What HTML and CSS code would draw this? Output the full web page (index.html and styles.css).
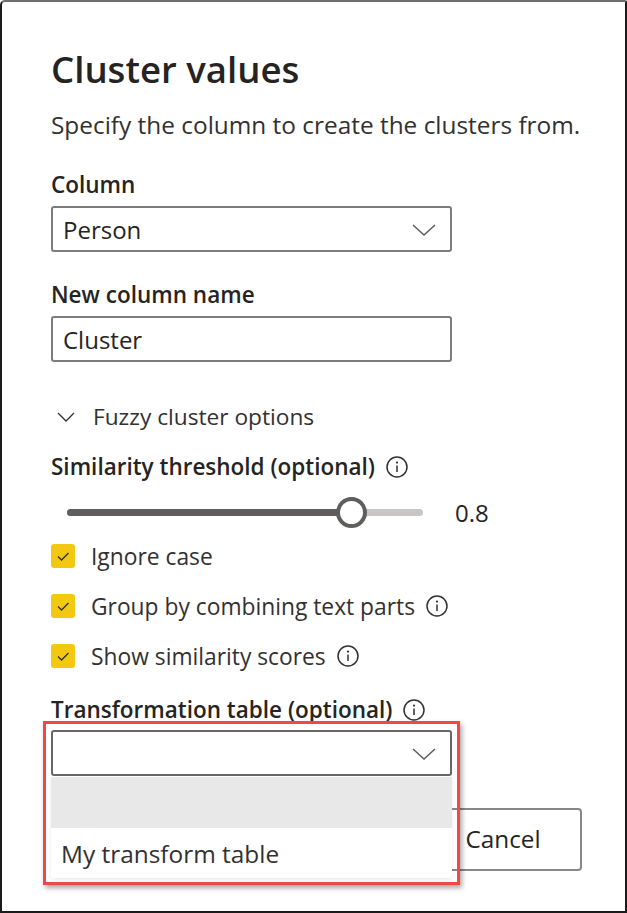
FILE: index.html
```html
<!DOCTYPE html>
<html lang="en">
<head>
<meta charset="utf-8">
<title>Cluster values</title>
<link rel="stylesheet" href="styles.css">
</head>
<body>
<div class="dialog">
  <h1 class="title">Cluster values</h1>
  <p class="subtitle">Specify the column to create the clusters from.</p>

  <label class="label label-column">Column</label>
  <div class="field select">
    <span class="field-text">Person</span>
    <svg class="chev" width="24" height="12" viewBox="0 0 24 12"><path d="M1 1 L12 11 L23 1" fill="none" stroke="#605e5c" stroke-width="1.5"/></svg>
  </div>

  <label class="label label-name">New column name</label>
  <div class="field">
    <span class="field-text">Cluster</span>
  </div>

  <div class="fuzzy">
    <svg class="fuzzy-chev" width="18" height="10" viewBox="0 0 18 10"><path d="M1 1 L9 9 L17 1" fill="none" stroke="#323130" stroke-width="1.3"/></svg>
    <span>Fuzzy cluster options</span>
  </div>

  <div class="label label-sim">Similarity threshold (optional)
    <svg class="info" width="22" height="22" viewBox="0 0 22 22"><circle cx="11" cy="11" r="10" fill="none" stroke="#323130" stroke-width="1.5"/><circle cx="11" cy="6.6" r="1.1" fill="#323130"/><path d="M11 9.5 V16" stroke="#323130" stroke-width="1.5"/></svg>
  </div>

  <div class="slider-row">
    <div class="track">
      <div class="track-fill" style="width: 80%"></div>
      <div class="thumb" style="left: 80%"></div>
    </div>
    <span class="slider-value">0.8</span>
  </div>

  <div class="checks">
    <div class="check-row">
      <span class="box"><svg width="24" height="24" viewBox="0 0 24 24"><path d="M7 12.5 L10.5 16 L17.5 9" fill="none" stroke="#323130" stroke-width="1.3"/></svg></span>
      <span>Ignore case</span>
    </div>
    <div class="check-row">
      <span class="box"><svg width="24" height="24" viewBox="0 0 24 24"><path d="M7 12.5 L10.5 16 L17.5 9" fill="none" stroke="#323130" stroke-width="1.3"/></svg></span>
      <span>Group by combining text parts</span>
      <svg class="info" width="22" height="22" viewBox="0 0 22 22"><circle cx="11" cy="11" r="10" fill="none" stroke="#323130" stroke-width="1.5"/><circle cx="11" cy="6.6" r="1.1" fill="#323130"/><path d="M11 9.5 V16" stroke="#323130" stroke-width="1.5"/></svg>
    </div>
    <div class="check-row">
      <span class="box"><svg width="24" height="24" viewBox="0 0 24 24"><path d="M7 12.5 L10.5 16 L17.5 9" fill="none" stroke="#323130" stroke-width="1.3"/></svg></span>
      <span>Show similarity scores</span>
      <svg class="info" width="22" height="22" viewBox="0 0 22 22"><circle cx="11" cy="11" r="10" fill="none" stroke="#323130" stroke-width="1.5"/><circle cx="11" cy="6.6" r="1.1" fill="#323130"/><path d="M11 9.5 V16" stroke="#323130" stroke-width="1.5"/></svg>
    </div>
  </div>

  <div class="label label-trans">Transformation table (optional)
    <svg class="info" width="22" height="22" viewBox="0 0 22 22"><circle cx="11" cy="11" r="10" fill="none" stroke="#323130" stroke-width="1.5"/><circle cx="11" cy="6.6" r="1.1" fill="#323130"/><path d="M11 9.5 V16" stroke="#323130" stroke-width="1.5"/></svg>
  </div>

  <div class="trans-wrap">
    <div class="field select select-open">
      <span class="field-text"></span>
      <svg class="chev" width="24" height="12" viewBox="0 0 24 12"><path d="M1 1 L12 11 L23 1" fill="none" stroke="#605e5c" stroke-width="1.5"/></svg>
    </div>
    <div class="menu">
      <div class="menu-item menu-item-hover"></div>
      <div class="menu-item">My transform table</div>
    </div>
    <div class="highlight"></div>
  </div>

  <div class="footer">
    <button class="btn">Cancel</button>
  </div>
</div>
</body>
</html>
```

FILE: styles.css
```css
* { box-sizing: border-box; }

html, body {
  margin: 0;
  padding: 0;
  background: #ffffff;
}

body {
  font-family: "Open Sans", "Noto Sans", "Liberation Sans", sans-serif;
  color: #252423;
}

.dialog {
  width: 627px;
  height: 913px;
  border: 2px solid #1b1b1b;
  border-top-color: #6e6e6e;
  border-radius: 5px 2px 0 0;
  padding: 45px 43px 0 49px;
  display: flex;
  flex-direction: column;
  overflow: hidden;
}

.title {
  margin: 0;
  font-size: 36.6px;
  line-height: 44px;
  font-weight: 600;
  color: #252423;
}

.subtitle {
  margin: 20px 0 0;
  font-size: 24.4px;
  line-height: 28px;
  font-weight: 400;
  color: #323130;
}

.label {
  display: flex;
  align-items: center;
  gap: 11px;
  font-size: 22.5px;
  line-height: 26px;
  font-weight: 600;
  color: #252423;
}

.label-column { margin-top: 33px; }
.label-name { margin-top: 30px; }
.label-sim { margin-top: 25px; }
.label-trans { margin-top: 29px; }

.field {
  margin-top: 8px;
  width: 401px;
  height: 46px;
  border: 2px solid #7f7d7b;
  border-radius: 3px;
  display: flex;
  align-items: center;
  justify-content: space-between;
  padding: 0 14px 0 10px;
  font-size: 24px;
  color: #252423;
}

.chev {
  display: block;
  margin-top: 2px;
}

.fuzzy {
  margin-top: 41px;
  height: 26px;
  display: flex;
  align-items: center;
  padding-left: 6px;
  font-size: 22.7px;
  color: #323130;
}

.fuzzy-chev {
  margin-right: 18px;
  margin-top: 2px;
}

.info {
  display: block;
  flex: none;
}

.slider-row {
  margin-top: 17px;
  height: 30px;
  display: flex;
  align-items: center;
  padding-left: 16px;
}

.track {
  position: relative;
  width: 356px;
  height: 7px;
  border-radius: 4px;
  background: #c8c6c4;
}

.track-fill {
  height: 100%;
  border-radius: 4px;
  background: #605e5c;
}

.thumb {
  position: absolute;
  top: 50%;
  width: 31px;
  height: 31px;
  margin: -15.5px 0 0 -15.5px;
  border-radius: 50%;
  border: 4px solid #605e5c;
  background: #ffffff;
}

.slider-value {
  margin-left: 32px;
  font-size: 24px;
  font-weight: 500;
  color: #252423;
}

.checks {
  margin-top: 17px;
  display: flex;
  flex-direction: column;
  gap: 26px;
}

.check-row {
  height: 24px;
  display: flex;
  align-items: center;
  gap: 11px;
  font-size: 22.8px;
  color: #323130;
}

.check-row .box {
  width: 24px;
  height: 24px;
  margin-right: 5px;
  border-radius: 3px;
  background: #f2c811;
  flex: none;
}

.check-row .box svg {
  display: block;
}

.trans-wrap {
  position: relative;
  margin-top: 7px;
}

.select-open {
  margin-top: 0;
  border-color: #666666;
}

.menu {
  position: absolute;
  left: 0;
  top: 47px;
  width: 401px;
  background: #ffffff;
  box-shadow: 0 2px 4px rgba(0,0,0,0.08);
  border-radius: 0 0 3px 3px;
  z-index: 2;
}

.menu-item {
  height: 50px;
  display: flex;
  align-items: center;
  padding-left: 10px;
  font-size: 24.4px;
  color: #323130;
}

.menu-item-hover {
  height: 51px;
  background: #e8e8e8;
}

.highlight {
  position: absolute;
  left: -8px;
  top: -9px;
  width: 417px;
  height: 164px;
  border: 3px solid #f04747;
  box-shadow: 2px 3px 5px rgba(0,0,0,0.35);
  z-index: 3;
  pointer-events: none;
}

.footer {
  margin-top: 32px;
  display: flex;
  justify-content: flex-end;
}

.btn {
  width: 158px;
  height: 63px;
  border: 2px solid #8a8886;
  border-radius: 4px;
  background: #ffffff;
  font-family: inherit;
  font-size: 24.3px;
  color: #252423;
  padding: 0 0 2px 0;
}
```
